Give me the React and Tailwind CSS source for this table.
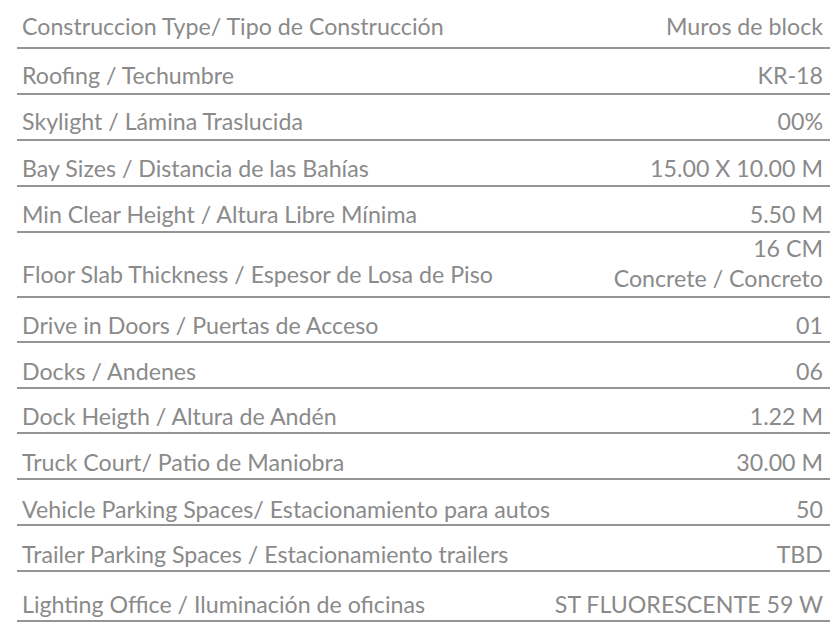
const rows = [
  { label: 'Construccion Type/ Tipo de Construcción', value: 'Muros de block', h: 'h-[49px]', pb: 'pb-[8px]' },
  { label: 'Roofing / Techumbre', value: 'KR-18', h: 'h-[46px]', pb: 'pb-[5px]' },
  { label: 'Skylight / Lámina Traslucida', value: '00%', h: 'h-[46px]', pb: 'pb-[5px]' },
  { label: 'Bay Sizes / Distancia de las Bahías', value: '15.00 X 10.00 M', h: 'h-[46px]', pb: 'pb-[4px]' },
  { label: 'Min Clear Height / Altura Libre Mínima', value: '5.50 M', h: 'h-[46px]', pb: 'pb-[4px]' },
  { label: 'Floor Slab Thickness / Espesor de Losa de Piso', value: ['16 CM', 'Concrete / Concreto'], h: 'h-[65px]', pb: 'pb-[3px]' },
  { label: 'Drive in Doors / Puertas de Acceso', value: '01', h: 'h-[45px]', pb: 'pb-[3px]' },
  { label: 'Docks / Andenes', value: '06', h: 'h-[46px]', pb: 'pb-[3px]' },
  { label: 'Dock Heigth / Altura de Andén', value: '1.22 M', h: 'h-[45px]', pb: 'pb-[3px]' },
  { label: 'Truck Court/ Patio de Maniobra', value: '30.00 M', h: 'h-[46px]', pb: 'pb-[3px]' },
  { label: 'Vehicle Parking Spaces/ Estacionamiento para autos', value: '50', h: 'h-[46px]', pb: 'pb-[2px]' },
  { label: 'Trailer Parking Spaces / Estacionamiento trailers', value: 'TBD', h: 'h-[46px]', pb: 'pb-[3px]' },
  { label: 'Lighting Office / Iluminación de oficinas', value: 'ST FLUORESCENTE 59 W', h: 'h-[50px]', pb: 'pb-[3px]' },
]

function App() {
  return (
    <div className="w-[840px] h-[630px] bg-white overflow-hidden font-['Lato',sans-serif] text-[#8a8a8a] text-[23.2px] leading-[26px]">
      <div className="ml-[17px] w-[813px]">
        {rows.map((r) => (
          <div
            key={r.label}
            className={`flex justify-between items-end border-b-2 border-[#949494] pl-[5px] pr-[7px] ${r.h} ${r.pb}`}
          >
            <span className={Array.isArray(r.value) ? 'mb-[6px]' : ''}>{r.label}</span>
            {Array.isArray(r.value) ? (
              <span className="text-right leading-[30px]">
                <span className="block">{r.value[0]}</span>
                <span className="block">{r.value[1]}</span>
              </span>
            ) : (
              <span>{r.value}</span>
            )}
          </div>
        ))}
      </div>
    </div>
  )
}

export default App
